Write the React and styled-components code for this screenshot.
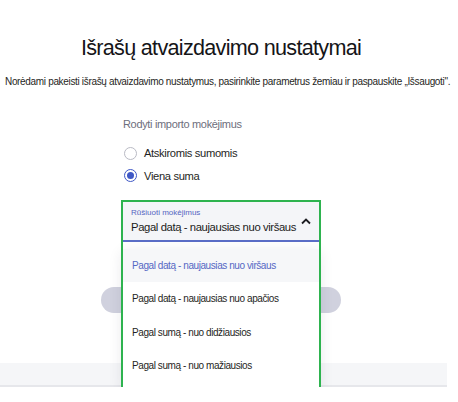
import React from "react";
import styled, { createGlobalStyle } from "styled-components";

const Global = createGlobalStyle`
  html, body { margin: 0; padding: 0; background: #fff; }
  body { font-family: "Liberation Sans", Arial, sans-serif; color: #1b1b1f; }
`;

const Page = styled.div`
  width: 447px;
  display: flex;
  flex-direction: column;
`;

const Main = styled.main`
  width: 442px;
  display: flex;
  flex-direction: column;
`;

const Title = styled.h1`
  margin: 34px 0 0;
  font-size: 21.6px;
  line-height: 28px;
  font-weight: 400;
  text-align: center;
  color: #151518;
  letter-spacing: -0.7px;
`;

const Lead = styled.p`
  margin: 13px 0 0;
  padding-left: 5px;
  font-size: 10px;
  line-height: 14px;
  white-space: nowrap;
  color: #1f1f24;
  letter-spacing: -0.33px;
`;

const Form = styled.div`
  width: 196px;
  margin: 27px auto 0;
  display: flex;
  flex-direction: column;
`;

const GroupLabel = styled.div`
  font-size: 11px;
  line-height: 16px;
  color: #6d6e7c;
  letter-spacing: -0.33px;
`;

const RadioList = styled.div`
  margin-top: 10px;
  display: flex;
  flex-direction: column;
`;

const RadioRow = styled.label`
  display: flex;
  align-items: center;
  gap: 7px;
  height: 22.4px;
  font-size: 11.2px;
  letter-spacing: -0.35px;
  color: #1f1f24;
`;

const RadioDot = styled.span`
  box-sizing: border-box;
  width: 13px;
  height: 13px;
  border-radius: 50%;
  margin-left: 1px;
  border: 1px solid ${(p) => (p.$checked ? "#3f58c6" : "#b9bac4")};
  display: flex;
  align-items: center;
  justify-content: center;
  &::after {
    content: "";
    width: 7px;
    height: 7px;
    border-radius: 50%;
    background: ${(p) => (p.$checked ? "#3f58c6" : "transparent")};
  }
`;

const SelectWrap = styled.div`
  position: relative;
  margin-top: 15px;
`;

const Field = styled.div`
  box-sizing: border-box;
  height: 40px;
  background: #f4f5f8;
  border-bottom: 2px solid #5b6ec7;
  padding: 6px 8px 0 8px;
  display: flex;
  align-items: flex-start;
  justify-content: space-between;
`;

const FieldText = styled.div`
  display: flex;
  flex-direction: column;
  min-width: 0;
`;

const FieldLabel = styled.span`
  font-size: 8px;
  line-height: 10px;
  color: #5465c2;
`;

const FieldValue = styled.span`
  margin-top: 2px;
  font-size: 11.3px;
  line-height: 15px;
  color: #1c1c21;
  white-space: nowrap;
  letter-spacing: -0.4px;
`;

const Chevron = styled.svg`
  margin-top: 10px;
  flex: none;
`;

const Menu = styled.ul`
  position: absolute;
  left: 0;
  right: 0;
  top: calc(100% + 7px);
  margin: 0;
  padding: 0 0 6px;
  list-style: none;
  background: #fff;
  box-shadow: 0 4px 14px rgba(30, 30, 60, 0.12);
  z-index: 2;
`;

const Option = styled.li`
  height: 33.3px;
  display: flex;
  align-items: center;
  padding-left: 9px;
  font-size: 10px;
  letter-spacing: -0.42px;
  color: ${(p) => (p.$active ? "#5567c4" : "#1f1f24")};
  background: ${(p) => (p.$active ? "#f6f7f9" : "#fff")};
  white-space: nowrap;
`;

const Frame = styled.div`
  position: absolute;
  left: -2px;
  right: -2px;
  top: -2px;
  height: 189px;
  border: 2px solid #2eb34f;
  pointer-events: none;
  z-index: 3;
`;

const SaveButton = styled.button`
  width: 240px;
  height: 26px;
  margin: 45px auto 0;
  border: none;
  border-radius: 13px;
  background: #d0d1de;
  color: #fff;
  font-family: inherit;
  font-size: 12px;
`;

const FooterBand = styled.div`
  margin-top: 50px;
  height: 22px;
  background: #f5f6f8;
  border-bottom: 2px solid #e6e7eb;
`;

const options = [
  "Pagal datą - naujausias nuo viršaus",
  "Pagal datą - naujausias nuo apačios",
  "Pagal sumą - nuo didžiausios",
  "Pagal sumą - nuo mažiausios",
];

export default function App() {
  return (
    <>
      <Global />
      <Page>
        <Main>
          <Title>Išrašų atvaizdavimo nustatymai</Title>
          <Lead>
            Norėdami pakeisti išrašų atvaizdavimo nustatymus, pasirinkite parametrus žemiau ir paspauskite „Išsaugoti".
          </Lead>
          <Form>
            <GroupLabel>Rodyti importo mokėjimus</GroupLabel>
            <RadioList>
              <RadioRow>
                <RadioDot />
                Atskiromis sumomis
              </RadioRow>
              <RadioRow>
                <RadioDot $checked />
                Viena suma
              </RadioRow>
            </RadioList>
            <SelectWrap>
              <Field>
                <FieldText>
                  <FieldLabel>Rūšiuoti mokėjimus</FieldLabel>
                  <FieldValue>Pagal datą - naujausias nuo viršaus</FieldValue>
                </FieldText>
                <Chevron width="10" height="7" viewBox="0 0 10 7">
                  <path d="M1 5.5 L5 1.5 L9 5.5" fill="none" stroke="#1c1c21" strokeWidth="1.8" />
                </Chevron>
              </Field>
              <Menu>
                {options.map((o, i) => (
                  <Option key={o} $active={i === 0}>
                    {o}
                  </Option>
                ))}
              </Menu>
              <Frame />
            </SelectWrap>
          </Form>
          <SaveButton>Išsaugoti</SaveButton>
        </Main>
        <FooterBand />
      </Page>
    </>
  );
}
